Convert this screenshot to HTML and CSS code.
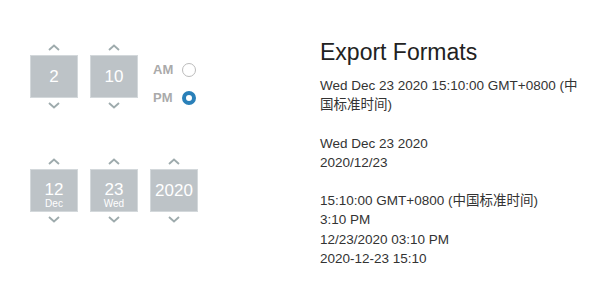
FILE: index.html
```html
<!DOCTYPE html>
<html lang="en">

<head>
  <meta charset="UTF-8">
  <title>Date picker</title>
  <link rel="stylesheet" href="styles.css">
</head>

<body>
  <div class="page">
    <div class="pickers">
      <!-- time row -->
      <div class="picker-row">
        <div class="spinner">
          <button class="arrow"><svg width="12" height="7" viewBox="0 0 12 7"><polyline points="1,6 6,1.5 11,6" /></svg></button>
          <div class="cell">2</div>
          <button class="arrow"><svg width="12" height="7" viewBox="0 0 12 7"><polyline points="1,1 6,5.5 11,1" /></svg></button>
        </div>
        <div class="spinner">
          <button class="arrow"><svg width="12" height="7" viewBox="0 0 12 7"><polyline points="1,6 6,1.5 11,6" /></svg></button>
          <div class="cell">10</div>
          <button class="arrow"><svg width="12" height="7" viewBox="0 0 12 7"><polyline points="1,1 6,5.5 11,1" /></svg></button>
        </div>
        <div class="ampm">
          <label class="choice">AM <span class="radio"></span></label>
          <label class="choice">PM <span class="radio checked"></span></label>
        </div>
      </div>

      <!-- date row -->
      <div class="picker-row">
        <div class="spinner">
          <button class="arrow"><svg width="12" height="7" viewBox="0 0 12 7"><polyline points="1,6 6,1.5 11,6" /></svg></button>
          <div class="cell labelled">12<span class="sub">Dec</span></div>
          <button class="arrow"><svg width="12" height="7" viewBox="0 0 12 7"><polyline points="1,1 6,5.5 11,1" /></svg></button>
        </div>
        <div class="spinner">
          <button class="arrow"><svg width="12" height="7" viewBox="0 0 12 7"><polyline points="1,6 6,1.5 11,6" /></svg></button>
          <div class="cell labelled">23<span class="sub">Wed</span></div>
          <button class="arrow"><svg width="12" height="7" viewBox="0 0 12 7"><polyline points="1,1 6,5.5 11,1" /></svg></button>
        </div>
        <div class="spinner">
          <button class="arrow"><svg width="12" height="7" viewBox="0 0 12 7"><polyline points="1,6 6,1.5 11,6" /></svg></button>
          <div class="cell">2020</div>
          <button class="arrow"><svg width="12" height="7" viewBox="0 0 12 7"><polyline points="1,1 6,5.5 11,1" /></svg></button>
        </div>
      </div>
    </div>

    <div class="formats">
      <h2>Export Formats</h2>
      <p>Wed Dec 23 2020 15:10:00 GMT+0800 (中国标准时间)</p>
      <p>Wed Dec 23 2020<br/>2020/12/23</p>
      <p>15:10:00 GMT+0800 (中国标准时间)<br/>3:10 PM<br/>12/23/2020 03:10 PM<br/>2020-12-23 15:10</p>
    </div>
  </div>
</body>

</html>
```

FILE: styles.css
```css
body {
  margin: 0;
  font-family: "Liberation Sans", Arial, "Noto Sans CJK SC", sans-serif;
  color: #333;
}

.page {
  display: flex;
}

/* Left side: spinners */
.pickers {
  width: 290px;
  padding: 40px 0 0 30px;
  display: flex;
  flex-direction: column;
  gap: 41px;
}

.picker-row {
  display: flex;
  gap: 12px;
}

.spinner {
  display: flex;
  flex-direction: column;
  align-items: center;
  width: 48px;
}

.arrow {
  border: none;
  background: none;
  padding: 0;
  height: 15px;
  width: 30px;
  display: flex;
  align-items: center;
  justify-content: center;
  cursor: pointer;
}

.arrow svg polyline {
  fill: none;
  stroke: #9eabad;
  stroke-width: 1.9;
}

.cell {
  box-sizing: border-box;
  width: 48px;
  height: 43px;
  background-color: #bdc3c7;
  border: 1px solid #d3d8db;
  color: #fff;
  font-size: 17px;
  display: flex;
  flex-direction: column;
  align-items: center;
  justify-content: center;
}

.cell.labelled {
  padding-top: 9px;
  line-height: 17px;
}

.cell .sub {
  font-size: 10px;
  line-height: 11px;
}

.ampm {
  display: flex;
  flex-direction: column;
  justify-content: center;
  gap: 13px;
  padding: 14px 0 0 3px;
}

.choice {
  display: flex;
  align-items: center;
  gap: 9px;
  font-size: 13px;
  font-weight: bold;
  color: #aaa;
}

.radio {
  box-sizing: border-box;
  width: 14px;
  height: 14px;
  border-radius: 50%;
  border: 1.5px solid #bbb;
  background: #fff;
}

.radio.checked {
  border: 4px solid #2a80b9;
}

/* Right side: export text */
.formats {
  padding-top: 38px;
  width: 268px;
  font-size: 13.5px;
  line-height: 19.2px;
}

.formats h2 {
  margin: 0 0 10px;
  font-size: 23px;
  font-weight: normal;
  line-height: 28px;
  color: #222;
}

.formats p {
  margin: 0 0 19.2px;
}
```
